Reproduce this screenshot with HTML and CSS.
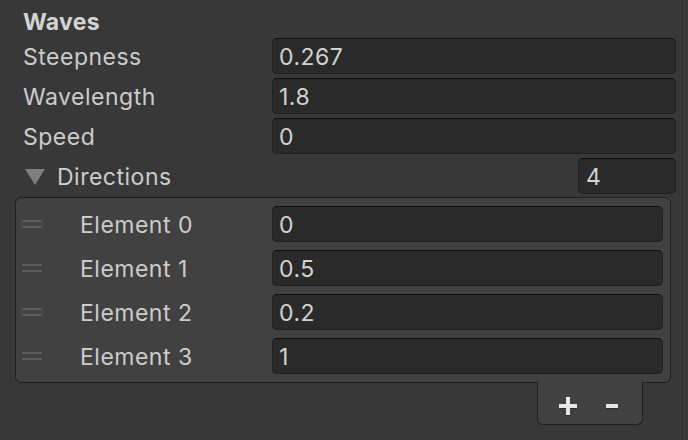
FILE: index.html
```html
<!DOCTYPE html>
<html>
<head>
<meta charset="utf-8">
<link rel="stylesheet" href="styles.css">
</head>
<body>
<div class="window">
  <div class="inspector">
    <div class="header">Waves</div>
    <div class="row"><div class="label">Steepness</div><div class="field">0.267</div></div>
    <div class="row"><div class="label">Wavelength</div><div class="field">1.8</div></div>
    <div class="row"><div class="label">Speed</div><div class="field">0</div></div>
    <div class="row dir-row">
      <div class="foldout"><span class="tri"></span><span class="label">Directions</span></div>
      <div class="field count">4</div>
    </div>
    <div class="list">
      <div class="list-box">
        <div class="el-row"><span class="handle"></span><span class="el-label">Element 0</span><div class="field">0</div></div>
        <div class="el-row"><span class="handle"></span><span class="el-label">Element 1</span><div class="field">0.5</div></div>
        <div class="el-row"><span class="handle"></span><span class="el-label">Element 2</span><div class="field">0.2</div></div>
        <div class="el-row"><span class="handle"></span><span class="el-label">Element 3</span><div class="field">1</div></div>
      </div>
      <div class="footer">
        <div class="tab">
          <svg class="btn" width="20" height="20" viewBox="0 0 20 20"><rect x="1" y="9" width="18" height="4" fill="#1a1a1a" opacity=".5"/><rect x="8" y="2" width="4" height="18" fill="#1a1a1a" opacity=".5"/><rect x="1" y="8" width="18" height="4" fill="#e6e6e6"/><rect x="8" y="1" width="4" height="18" fill="#e6e6e6"/></svg>
          <svg class="btn" width="14" height="20" viewBox="0 0 14 20"><rect x="1" y="9" width="12" height="4" fill="#1a1a1a" opacity=".5"/><rect x="1" y="8" width="12" height="4" fill="#e6e6e6"/></svg>
        </div>
      </div>
    </div>
  </div>
  <div class="strip"></div>
</div>
</body>
</html>
```
FILE: styles.css
```css
html, body {
  margin: 0;
  padding: 0;
  background: #383838;
}
body {
  width: 688px;
  height: 440px;
  overflow: hidden;
  font-family: Inter, "Noto Sans", sans-serif;
  font-size: 23px;
  letter-spacing: 0.5px;
  color: #cccccc;
}
.window {
  display: flex;
  height: 440px;
}
.inspector {
  width: 676px;
  padding-right: 6px;
}
.strip {
  width: 5px;
  border-left: 1px solid #2f2f2f;
  background: #3a3a3a;
}
.header {
  height: 31px;
  padding-top: 7px;
  padding-left: 23px;
  line-height: 30px;
  font-weight: 700;
  letter-spacing: 0.3px;
  color: #d4d4d4;
}
.row {
  display: flex;
  align-items: center;
  height: 36px;
  margin-bottom: 4px;
  padding-left: 23px;
}
.label {
  width: 249px;
  height: 36px;
  line-height: 38px;
  white-space: nowrap;
}
.field {
  flex: 1;
  height: 36px;
  box-sizing: border-box;
  background: #2a2a2a;
  border: 1px solid #212121;
  border-top-color: #0e0e0e;
  border-radius: 5px;
  padding-left: 6px;
  line-height: 36px;
  color: #d2d2d2;
  white-space: nowrap;
  overflow: hidden;
}
.dir-row {
  justify-content: space-between;
  padding-left: 25px;
  margin-bottom: 3px;
}
.foldout {
  display: flex;
  align-items: center;
}
.tri {
  width: 0;
  height: 0;
  border-left: 10px solid transparent;
  border-right: 10px solid transparent;
  border-top: 16px solid #7e7e7e;
  margin-right: 12px;
  margin-top: 2px;
}
.foldout .label {
  width: auto;
}
.field.count {
  flex: 0 0 98px;
  padding-left: 7px;
}
.list {
  padding-left: 15px;
  padding-right: 5px;
}
.list-box {
  background: #414141;
  border: 1px solid #1f1f1f;
  border-radius: 6px;
  padding: 8px 7px 8px 6px;
}
.el-row {
  display: flex;
  align-items: center;
  height: 36px;
  margin-bottom: 8px;
}
.el-row:last-child {
  margin-bottom: 0;
}
.handle {
  width: 20px;
  height: 8px;
  box-sizing: border-box;
  border-top: 2px solid #5c5c5c;
  border-bottom: 2px solid #5c5c5c;
  margin-top: -1px;
  margin-right: 38px;
}
.el-label {
  width: 192px;
  height: 36px;
  line-height: 38px;
  white-space: nowrap;
}
.footer {
  display: flex;
  justify-content: flex-end;
  padding-right: 28px;
}
.tab {
  margin-top: -1px;
  width: 106px;
  height: 43px;
  box-sizing: border-box;
  background: #414141;
  border: 1px solid #1f1f1f;
  border-top: none;
  border-radius: 0 0 6px 6px;
  display: flex;
  align-items: center;
  justify-content: center;
  gap: 27px;
  padding-right: 3px;
}
.btn {
  display: block;
  margin-top: 5px;
}
```
